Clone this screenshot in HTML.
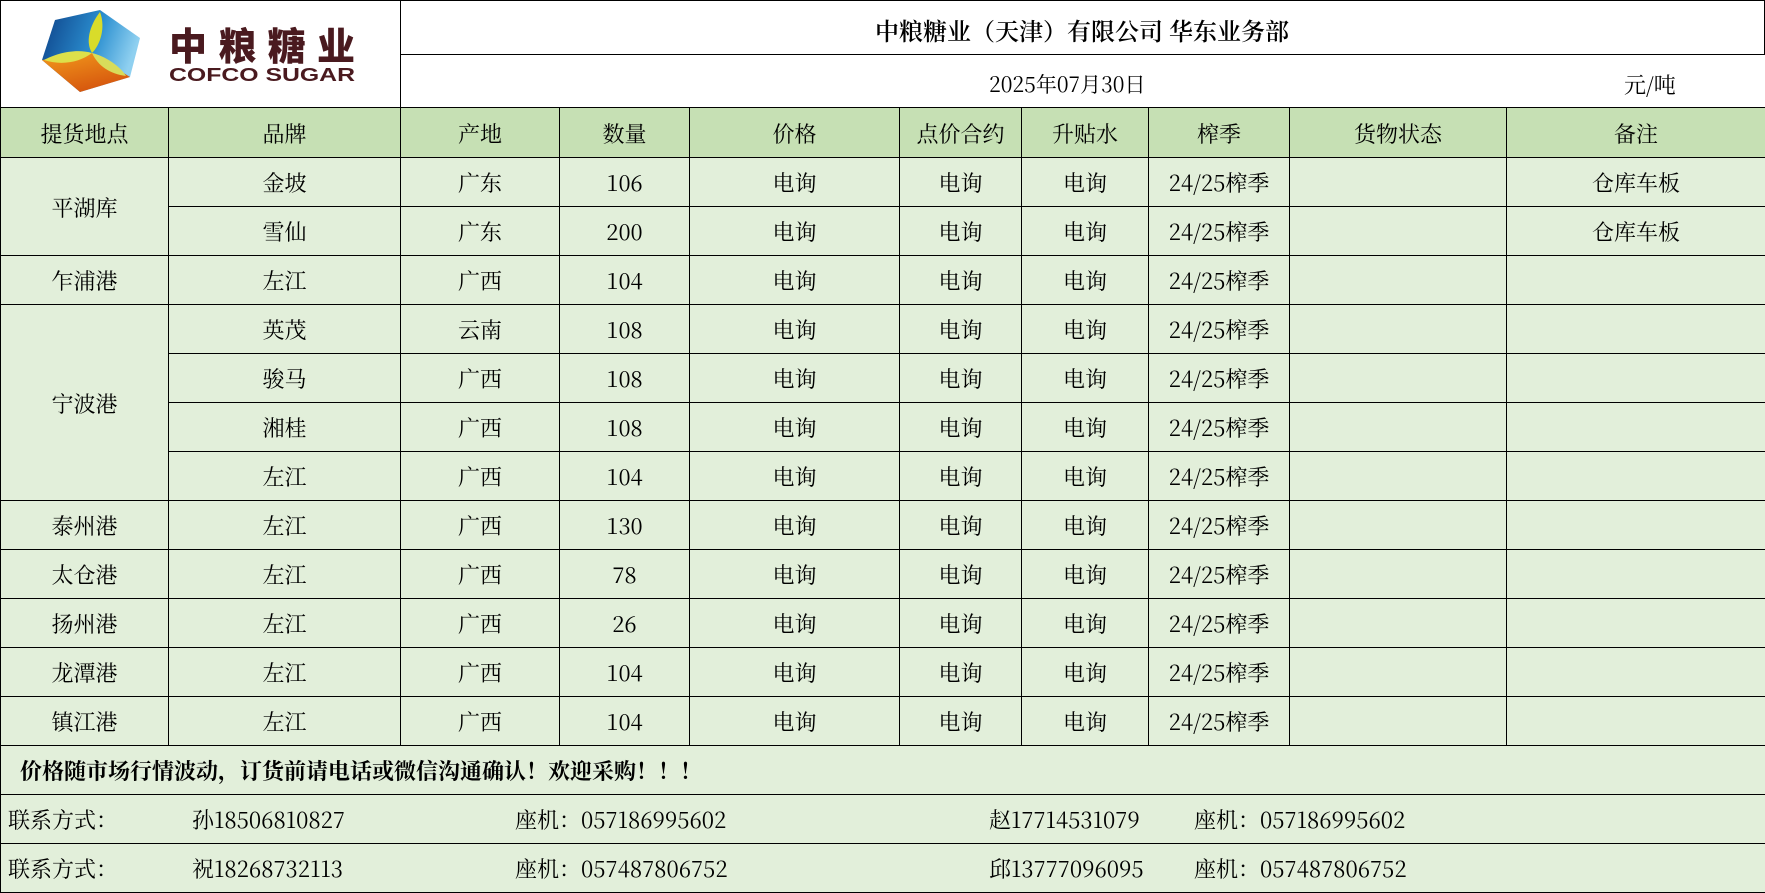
<!DOCTYPE html>
<html><head><meta charset="utf-8"><style>
body{margin:0;width:1765px;height:893px;overflow:hidden;background:#fff;font-family:"Noto Serif CJK SC","Liberation Serif",serif;color:#000}
.a{position:absolute;box-sizing:border-box}
table{position:absolute;left:0;top:107px;border-collapse:collapse;table-layout:fixed;width:1765px}
td{border:1.2px solid #000;text-align:center;font-size:22px;padding:2px 0 0 0;background:#E2EFDA;height:46px;white-space:nowrap;line-height:26px}
tr.h td{background:#C6E0B4;height:47px}
td.l{text-align:left;padding-left:7px}
.c{position:relative}
.c span{position:absolute;top:12px}
</style></head><body>
<div class="a" style="left:0;top:0;width:401px;height:109px;border:1.5px solid #000;border-right:1px solid #000"></div>
<svg class="a" style="left:0;top:0" width="400" height="108">
<defs>
<linearGradient id="b" x1="0" y1="0" x2="1" y2="0.3"><stop offset="0" stop-color="#0c3f86"/><stop offset="0.6" stop-color="#2b8fd0"/><stop offset="1" stop-color="#8fd0f0"/></linearGradient>
<linearGradient id="o" x1="0" y1="0" x2="0.5" y2="1"><stop offset="0" stop-color="#f29a1c"/><stop offset="1" stop-color="#d6560e"/></linearGradient>
</defs>
<polygon points="55,20 100,10 140,38 130,77 80,92 42,60" fill="url(#b)"/>
<polygon points="42,60 92,53 130,77 80,92" fill="url(#o)"/>
<path d="M92,53 C84,40 92,22 100,12 C106,28 100,45 92,53Z" fill="#d9dc2a"/>
<path d="M92,53 C75,48 55,54 44,60 C62,66 80,62 92,53Z" fill="#dde04a"/>
<path d="M92,53 C105,56 120,66 126,76 C110,74 98,66 92,53Z" fill="#d8dc5a"/>
<text x="169" y="60" font-family="'Noto Sans CJK SC',sans-serif" font-weight="900" font-size="38" fill="#4a1a1f" textLength="186" lengthAdjust="spacing">中粮糖业</text>
<text x="169" y="81" font-family="'Liberation Sans',sans-serif" font-weight="bold" font-size="18" fill="#4a1a1f" textLength="186" lengthAdjust="spacingAndGlyphs">COFCO SUGAR</text>
</svg>
<div class="a" style="left:400px;top:0;width:1365px;height:55px;border-top:1.5px solid #000;border-right:1.5px solid #000;border-bottom:1.2px solid #000;font-size:24px;font-weight:600;text-align:center;line-height:58px">中粮糖业（天津）有限公司 华东业务部</div>
<div class="a" style="left:989px;top:69px;font-size:21px">2025年07月30日</div>
<div class="a" style="left:1624px;top:69px;font-size:22px">元/吨</div>
<table>
<colgroup><col style="width:168px"><col style="width:232px"><col style="width:159px"><col style="width:130px"><col style="width:210px"><col style="width:122px"><col style="width:127px"><col style="width:141px"><col style="width:217px"><col style="width:259px"></colgroup>
<tr class="h"><td>提货地点</td><td>品牌</td><td>产地</td><td>数量</td><td>价格</td><td>点价合约</td><td>升贴水</td><td>榨季</td><td>货物状态</td><td>备注</td></tr>
<tr><td rowspan="2">平湖库</td><td>金坡</td><td>广东</td><td>106</td><td>电询</td><td>电询</td><td>电询</td><td>24/25榨季</td><td></td><td>仓库车板</td></tr>
<tr><td>雪仙</td><td>广东</td><td>200</td><td>电询</td><td>电询</td><td>电询</td><td>24/25榨季</td><td></td><td>仓库车板</td></tr>
<tr><td>乍浦港</td><td>左江</td><td>广西</td><td>104</td><td>电询</td><td>电询</td><td>电询</td><td>24/25榨季</td><td></td><td></td></tr>
<tr><td rowspan="4">宁波港</td><td>英茂</td><td>云南</td><td>108</td><td>电询</td><td>电询</td><td>电询</td><td>24/25榨季</td><td></td><td></td></tr>
<tr><td>骏马</td><td>广西</td><td>108</td><td>电询</td><td>电询</td><td>电询</td><td>24/25榨季</td><td></td><td></td></tr>
<tr><td>湘桂</td><td>广西</td><td>108</td><td>电询</td><td>电询</td><td>电询</td><td>24/25榨季</td><td></td><td></td></tr>
<tr><td>左江</td><td>广西</td><td>104</td><td>电询</td><td>电询</td><td>电询</td><td>24/25榨季</td><td></td><td></td></tr>
<tr><td>泰州港</td><td>左江</td><td>广西</td><td>130</td><td>电询</td><td>电询</td><td>电询</td><td>24/25榨季</td><td></td><td></td></tr>
<tr><td>太仓港</td><td>左江</td><td>广西</td><td>78</td><td>电询</td><td>电询</td><td>电询</td><td>24/25榨季</td><td></td><td></td></tr>
<tr><td>扬州港</td><td>左江</td><td>广西</td><td>26</td><td>电询</td><td>电询</td><td>电询</td><td>24/25榨季</td><td></td><td></td></tr>
<tr><td>龙潭港</td><td>左江</td><td>广西</td><td>104</td><td>电询</td><td>电询</td><td>电询</td><td>24/25榨季</td><td></td><td></td></tr>
<tr><td>镇江港</td><td>左江</td><td>广西</td><td>104</td><td>电询</td><td>电询</td><td>电询</td><td>24/25榨季</td><td></td><td></td></tr>
<tr><td colspan="10" class="l" style="padding-left:19px;font-weight:bold">价格随市场行情波动，订货前请电话或微信沟通确认！欢迎采购！！！</td></tr>
<tr><td colspan="10" class="l c"><span style="left:7px">联系方式：</span><span style="left:191px">孙18506810827</span><span style="left:514px">座机：057186995602</span><span style="left:988px">赵17714531079</span><span style="left:1193px">座机：057186995602</span></td></tr>
<tr><td colspan="10" class="l c"><span style="left:7px">联系方式：</span><span style="left:191px">祝18268732113</span><span style="left:514px">座机：057487806752</span><span style="left:988px">邱13777096095</span><span style="left:1193px">座机：057487806752</span></td></tr>
</table>
</body></html>
